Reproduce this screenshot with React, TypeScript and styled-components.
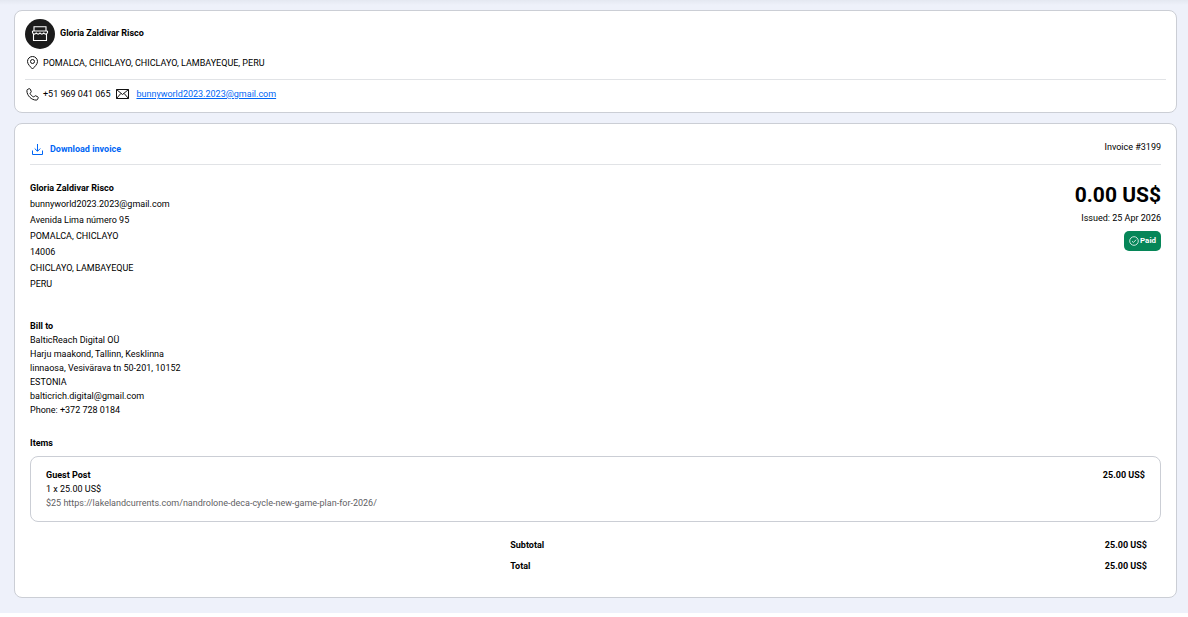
import React from "react";
import styled, { createGlobalStyle } from "styled-components";

const GlobalStyle = createGlobalStyle`
  *, *::before, *::after { box-sizing: border-box; }
  body {
    margin: 0;
    background: #fff;
    color: #000;
    font: 9px/14px Roboto, "Liberation Sans", sans-serif;
  }
  p, h1, h2, h3, dl, dd, dt, address { margin: 0; font-size: inherit; font-style: normal; }
`;

const Page = styled.main`
  display: flex;
  flex-direction: column;
  gap: 10px;
  padding: 10px 11px 15px 14px;
  background: linear-gradient(#e4e8f1, #eef1fa 5px);
`;

const Card = styled.section<{ $padding: string }>`
  padding: ${(p) => p.$padding};
  background: #fff;
  border: 1px solid #cbced5;
  border-radius: 8px;
`;

const Seller = styled.div`
  display: flex;
  gap: 5px;
  height: 30px;
`;

const Avatar = styled.span`
  display: grid;
  place-items: center;
  width: 30px;
  height: 30px;
  border-radius: 50%;
  background: #1b1b1b;
`;

const SellerName = styled.h1`
  line-height: 28px;
  font-weight: 700;
`;

const ContactRow = styled.div<{ $ruled?: boolean }>`
  display: flex;
  align-items: center;
  height: ${(p) => (p.$ruled ? 31 : 28)}px;
  padding: 0 1px ${(p) => (p.$ruled ? 2 : 0)}px;
  border-bottom: ${(p) => (p.$ruled ? "1px solid #e1e3e6" : "0")};
`;

const Contact = styled.span<{ $gap: number }>`
  display: flex;
  align-items: center;
  gap: ${(p) => p.$gap}px;
  margin-right: 6px;
`;

const MailLink = styled.a`
  color: #0066f5;
  text-decoration: underline;
`;

const Toolbar = styled.header`
  display: flex;
  justify-content: space-between;
  align-items: flex-start;
  padding-bottom: 5px;
  border-bottom: 1px solid #e1e3e6;
  line-height: 16px;
`;

const DownloadButton = styled.button`
  display: flex;
  align-items: center;
  gap: 6px;
  height: 20px;
  padding: 0 1px;
  border: 0;
  background: none;
  color: #0066f5;
  font: inherit;
  font-weight: 700;
  cursor: pointer;
`;

const Summary = styled.div`
  display: flex;
  justify-content: space-between;
  align-items: flex-start;
  padding-top: 15px;
  line-height: 16px;
`;

const Status = styled.div`
  display: flex;
  flex-direction: column;
  align-items: flex-end;
`;

const Amount = styled.p`
  font-size: 21px;
  line-height: 30px;
  font-weight: 700;
`;

const Badge = styled.span`
  display: flex;
  align-items: center;
  gap: 1px;
  height: 20px;
  margin-top: 5px;
  padding: 0 5px;
  border-radius: 5px;
  background: #068658;
  color: #fff;
  font-size: 8px;
  font-weight: 700;
`;

const Line = styled.p<{ $strong?: boolean; $muted?: boolean }>`
  font-weight: ${(p) => (p.$strong ? 700 : 400)};
  color: ${(p) => (p.$muted ? "#5f6164" : "inherit")};
`;

const BillTo = styled.address`
  margin-top: 27px;
`;

const Heading = styled.h2`
  margin: 19px 0 6px;
  font-weight: 700;
`;

const Item = styled.article`
  display: flex;
  justify-content: space-between;
  padding: 11px 15px;
  border: 1px solid #cbced5;
  border-radius: 8px;
`;

const Totals = styled.dl`
  margin: 13px 0 0 41.6667%;
  padding: 0 14px 0 9px;
  line-height: 21px;
  font-weight: 700;
`;

const TotalRow = styled.div`
  display: flex;
  justify-content: space-between;
`;

const StoreIcon = () => (
  <svg width="18" height="18" viewBox="0 0 18 18" fill="none" stroke="#fff" strokeWidth="1.1">
    <path d="M3 5.500V1.800h12v3.700M1.500 6h15" />
    <path d="M1.500 6v1.500a1.900 1.900 0 0 0 3.750 0 1.900 1.900 0 0 0 3.750 0 1.900 1.900 0 0 0 3.750 0 1.900 1.900 0 0 0 3.750 0V6" />
    <path d="M2.500 9v6.500h13V9" />
  </svg>
);

const PinIcon = () => (
  <svg width="13" height="14" viewBox="0 0 13 14" fill="none" stroke="#111" strokeWidth="1">
    <path d="M6.500 13C4.500 10.800 1.500 8.300 1.500 5.500a5 5 0 0 1 10 0c0 2.800-3 5.300-5 7.500z" />
    <circle cx="6.500" cy="5.500" r="2" />
  </svg>
);

const PhoneIcon = () => (
  <svg width="13" height="13" viewBox="0 0 13 13" fill="none" stroke="#111" strokeWidth="1" strokeLinejoin="round">
    <path d="M2.100 1.100 3.300.7c.4-.1.7 0 .9.400l1 2.200c.1.300.1.600-.2.900L4 5.200c.600 1.700 1.900 3 3.700 3.800l1.100-1.100c.2-.2.500-.3.800-.1l2.200 1c.4.2.5.500.4.900l-.4 1.200c-.2.700-.8 1.200-1.500 1.200C5.400 12.100.9 7.600.9 2.700c0-.8.500-1.400 1.200-1.600z" />
  </svg>
);

const MailIcon = () => (
  <svg width="13" height="10" viewBox="0 0 13 10" fill="none" stroke="#111" strokeWidth="1">
    <path d="M.5.500h12v9H.5zM.5.500l6 5 6-5M.5 9.500l4.300-5M12.500 9.500l-4.300-5" />
  </svg>
);

const DownloadIcon = () => (
  <svg width="13" height="13" viewBox="0 0 13 13" fill="none" stroke="currentColor" strokeWidth="1">
    <path d="M6.500 1v7M3.700 5.500l2.800 2.800 2.800-2.800M1.500 7.500v4h10v-4" />
  </svg>
);

const CheckIcon = () => (
  <svg width="10" height="10" viewBox="0 0 10 10" fill="none" stroke="#fff" strokeWidth=".8">
    <circle cx="5" cy="5" r="4.300" />
    <path d="m3 5.200 1.400 1.300L7.100 3.700" />
  </svg>
);

const sellerLines = [
  "bunnyworld2023.2023@gmail.com",
  "Avenida Lima número 95",
  "POMALCA, CHICLAYO",
  "14006",
  "CHICLAYO, LAMBAYEQUE",
  "PERU",
];

const billToLines = [
  "BalticReach Digital OÜ",
  "Harju maakond, Tallinn, Kesklinna",
  "linnaosa, Vesivärava tn 50-201, 10152",
  "ESTONIA",
  "balticrich.digital@gmail.com",
  "Phone: +372 728 0184",
];

export default function App() {
  return (
    <>
      <GlobalStyle />
      <Page>
        <Card $padding="8px 10px 4px">
          <Seller>
            <Avatar><StoreIcon /></Avatar>
            <SellerName>Gloria Zaldivar Risco</SellerName>
          </Seller>
          <ContactRow $ruled>
            <Contact $gap={4}>
              <PinIcon />
              POMALCA, CHICLAYO, CHICLAYO, LAMBAYEQUE, PERU
            </Contact>
          </ContactRow>
          <ContactRow>
            <Contact $gap={4}>
              <PhoneIcon />
              +51 969 041 065
            </Contact>
            <Contact $gap={7}>
              <MailIcon />
              <MailLink href="mailto:bunnyworld2023.2023@gmail.com">bunnyworld2023.2023@gmail.com</MailLink>
            </Contact>
          </ContactRow>
        </Card>

        <Card $padding="15px 15px 20px">
          <Toolbar>
            <DownloadButton type="button"><DownloadIcon />Download invoice</DownloadButton>
            <span>Invoice #3199</span>
          </Toolbar>
          <Summary>
            <address>
              <Line $strong>Gloria Zaldivar Risco</Line>
              {sellerLines.map((line) => <Line key={line}>{line}</Line>)}
            </address>
            <Status>
              <Amount>0.00 US$</Amount>
              <Line>Issued: 25 Apr 2026</Line>
              <Badge><CheckIcon />Paid</Badge>
            </Status>
          </Summary>
          <BillTo>
            <Line $strong>Bill to</Line>
            {billToLines.map((line) => <Line key={line}>{line}</Line>)}
          </BillTo>
          <Heading>Items</Heading>
          <Item>
            <div>
              <Line $strong>Guest Post</Line>
              <Line>1 x 25.00 US$</Line>
              <Line $muted>$25 https://lakelandcurrents.com/nandrolone-deca-cycle-new-game-plan-for-2026/</Line>
            </div>
            <Line $strong>25.00 US$</Line>
          </Item>
          <Totals>
            <TotalRow><dt>Subtotal</dt><dd>25.00 US$</dd></TotalRow>
            <TotalRow><dt>Total</dt><dd>25.00 US$</dd></TotalRow>
          </Totals>
        </Card>
      </Page>
    </>
  );
}
